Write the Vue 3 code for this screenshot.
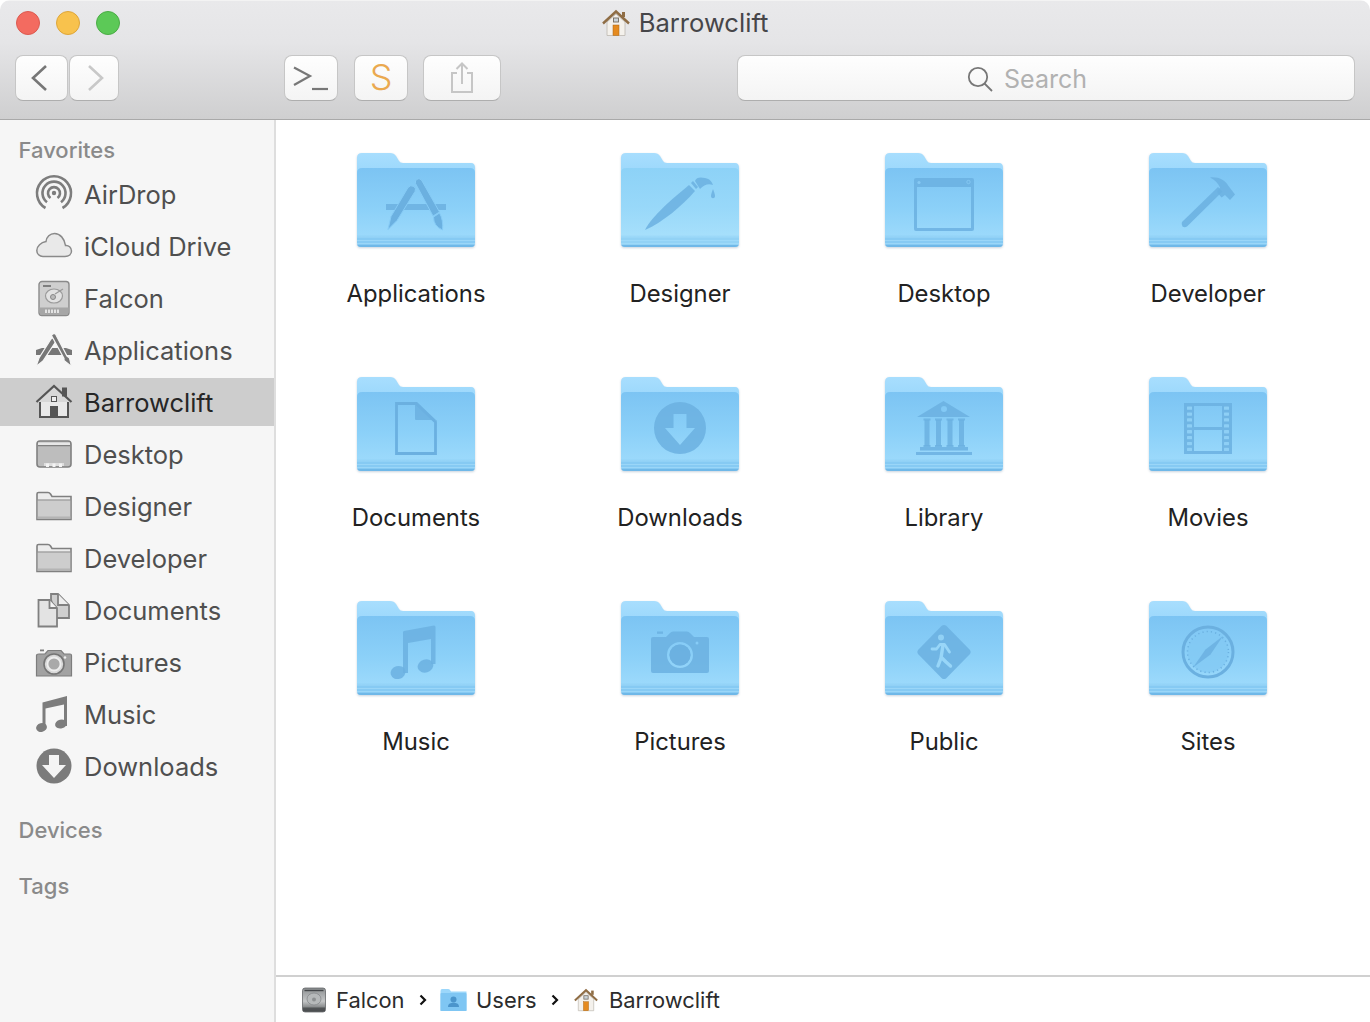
<script setup>
const favorites = [
  { name: 'AirDrop', icon: 'airdrop' },
  { name: 'iCloud Drive', icon: 'cloud' },
  { name: 'Falcon', icon: 'disk' },
  { name: 'Applications', icon: 'apps' },
  { name: 'Barrowclift', icon: 'home', selected: true },
  { name: 'Desktop', icon: 'desktop' },
  { name: 'Designer', icon: 'folder' },
  { name: 'Developer', icon: 'folder' },
  { name: 'Documents', icon: 'docs' },
  { name: 'Pictures', icon: 'camera' },
  { name: 'Music', icon: 'music' },
  { name: 'Downloads', icon: 'download' }
]
const folders = [
  { name: 'Applications', g: 'apps' },
  { name: 'Designer', g: 'brush', light: true },
  { name: 'Desktop', g: 'desktop' },
  { name: 'Developer', g: 'hammer' },
  { name: 'Documents', g: 'doc' },
  { name: 'Downloads', g: 'download' },
  { name: 'Library', g: 'library' },
  { name: 'Movies', g: 'movies' },
  { name: 'Music', g: 'music' },
  { name: 'Pictures', g: 'camera' },
  { name: 'Public', g: 'public' },
  { name: 'Sites', g: 'sites' }
]
const holes = [0, 1, 2, 3, 4, 5, 6, 7]
const columns = [43, 54.5, 66, 77.5]
</script>

<template>
  <div class="window">
    <svg class="defs" width="0" height="0" aria-hidden="true">
      <defs>
        <linearGradient id="front" x1="0" y1="0" x2="0" y2="1">
          <stop offset="0" stop-color="#7cc4f3" />
          <stop offset=".5" stop-color="#8bd0f8" />
          <stop offset=".85" stop-color="#9bd9fb" />
          <stop offset=".87" stop-color="#86caf3" />
          <stop offset="1" stop-color="#86caf3" />
        </linearGradient>
        <linearGradient id="frontLight" x1="0" y1="0" x2="0" y2="1">
          <stop offset="0" stop-color="#8dd2f7" />
          <stop offset=".5" stop-color="#98d8f9" />
          <stop offset=".85" stop-color="#a6dffb" />
          <stop offset=".87" stop-color="#92d2f5" />
          <stop offset="1" stop-color="#92d2f5" />
        </linearGradient>
        <linearGradient id="back" x1="0" y1="0" x2="0" y2="1">
          <stop offset="0" stop-color="#a8defe" />
          <stop offset=".25" stop-color="#9ad7fb" />
          <stop offset="1" stop-color="#8ccff8" />
        </linearGradient>
        <linearGradient id="diskGrad" x1="0" y1="0" x2="0" y2="1">
          <stop offset="0" stop-color="#8d9092" />
          <stop offset=".55" stop-color="#c4c6c7" />
          <stop offset="1" stop-color="#55585a" />
        </linearGradient>
        <symbol id="homeColor" viewBox="0 0 28 28">
          <path d="M5 13V26.5H23V13L14 5Z" fill="#f4f1ec" stroke="#bdb8b0" stroke-width=".8" />
          <path d="M1 14.5 14 2.5 27 14.5" fill="none" stroke="#8f6d45" stroke-width="2.4" />
          <rect x="20" y="3" width="3" height="5" fill="#8f6d45" />
          <rect x="11.5" y="9" width="5" height="4" fill="#c9d3da" stroke="#74695c" stroke-width=".9" />
          <rect x="11" y="16" width="6" height="10.5" fill="#e58a1f" stroke="#a96412" stroke-width=".5" />
        </symbol>
      </defs>
    </svg>

    <header class="toolbar">
      <div class="titlebar">
        <div class="lights">
          <span class="light red"></span>
          <span class="light yellow"></span>
          <span class="light green"></span>
        </div>
        <div class="title">
          <svg class="title-icon" width="28" height="28"><use href="#homeColor" /></svg>
          <span>Barrowclift</span>
        </div>
        <div></div>
      </div>
      <div class="tools">
        <div class="nav">
          <button class="btn back">
            <svg width="24" height="30" viewBox="0 0 24 30"><path d="M19 3 6 15 19 27" fill="none" stroke="#777" stroke-width="2.6" /></svg>
          </button>
          <button class="btn forward">
            <svg width="24" height="30" viewBox="0 0 24 30"><path d="M5 3 18 15 5 27" fill="none" stroke="#c8c8c8" stroke-width="2.6" /></svg>
          </button>
        </div>
        <button class="btn term">
          <svg width="36" height="30" viewBox="0 0 36 30"><path d="M1 4.500 17 13 1 22" fill="none" stroke="#777" stroke-width="2.2" /><path d="M19 26H35" stroke="#777" stroke-width="2.2" /></svg>
        </button>
        <button class="btn sublime">S</button>
        <button class="btn share">
          <svg width="24" height="32" viewBox="0 0 24 32"><path d="M7 11H2V30H22V11H17" fill="none" stroke="#c6c6c6" stroke-width="2" /><path d="M12 22V2M6.500 7 12 1.500 17.500 7" fill="none" stroke="#c6c6c6" stroke-width="2" /></svg>
        </button>
        <div class="search">
          <svg width="26" height="26" viewBox="0 0 26 26"><circle cx="11" cy="11" r="9.200" fill="none" stroke="#777" stroke-width="1.800" /><path d="M17.500 17.500 25 25" stroke="#777" stroke-width="1.800" /></svg>
          <span>Search</span>
        </div>
      </div>
    </header>

    <div class="body">
      <aside class="sidebar">
        <div class="heading first">Favorites</div>
        <div class="row" :class="{ selected: it.selected }" v-for="it in favorites" :key="it.name">
          <svg class="side-icon" width="36" height="36" viewBox="0 0 36 36">
            <g v-if="it.icon === 'airdrop'" fill="none" stroke="#7d7d7d" stroke-width="2.600">
              <path d="M9.500 31A17 17 0 1 1 26.500 31" />
              <path d="M11 25.200A11.500 11.500 0 1 1 25 25.200" />
              <path d="M14.500 21A6 6 0 1 1 21.500 21" />
              <circle cx="18" cy="16" r="2.200" fill="#7d7d7d" stroke="none" />
            </g>
            <path v-else-if="it.icon === 'cloud'" d="M7 27.500H29C33 27.500 35.500 25 35.500 22 35.500 18.500 32.500 16 29.500 16.500 28.500 9.500 24 4.500 18.500 4.500 14 4.500 10.500 8 10 12.500 5 13.500 .8 17 .8 21.500 .8 25 3.500 27.500 7 27.500Z" fill="#e9e9e9" stroke="#8a8a8a" stroke-width="1.500" />
            <g v-else-if="it.icon === 'disk'">
              <rect x="3" y=".5" width="30" height="34" rx="3" fill="#cfcfcf" stroke="#8a8a8a" stroke-width="1.400" />
              <path d="M7 5H15" stroke="#777" stroke-width="1.800" />
              <path d="M3.500 26.500H32.500V31Q32.500 34 30 34H6Q3.500 34 3.500 31Z" fill="#a6a6a6" />
              <path d="M10 28.500V32M13 28.500V32M16 28.500V32M19 28.500V32M22 28.500V32" stroke="#f2f2f2" stroke-width="1.600" />
              <ellipse cx="18" cy="15" rx="8.500" ry="7" fill="#e2e2e2" stroke="#9a9a9a" stroke-width="1.200" />
              <circle cx="17" cy="16" r="2.500" fill="#bbb" stroke="#888" />
              <path d="M19 13 27 8" stroke="#999" stroke-width="1.200" />
            </g>
            <g v-else-if="it.icon === 'apps'" fill="#777">
              <path d="M0 17 6 15H30L36 17V22H0Z" />
              <g stroke="#f6f6f6" stroke-width="1.200">
                <path d="M0 33.500 3 25 15 6Q17 4 19 5.500 20.500 7 19.500 9L7 28Z" />
                <path d="M15.500 2.500Q17 0 19.500 1L31 23 33.500 25 35.500 33.500 28 27.500 28 25.500Z" />
              </g>
            </g>
            <g v-else-if="it.icon === 'home'">
              <path d="M4 15.500V32H32V15.500" fill="#e9e9e9" stroke="#555" stroke-width="2" />
              <path d="M.5 17 18 1 35.500 17" fill="#d8d8d8" stroke="#555" stroke-width="2.200" />
              <rect x="26" y="2.500" width="5" height="9" fill="#555" />
              <rect x="15.500" y="11.500" width="5" height="5" fill="#eee" stroke="#555" stroke-width="1" />
              <rect x="14" y="21" width="8" height="11" fill="#555" />
            </g>
            <g v-else-if="it.icon === 'desktop'">
              <rect x="1" y="4" width="34" height="26" rx="3" fill="#bdbdbd" stroke="#808080" stroke-width="1.600" />
              <path d="M1.800 8.500H34.200" stroke="#808080" stroke-width="1.400" />
              <path d="M2 5.500H34V8H2Z" fill="#e7e7e7" />
              <path d="M8 29V26H28V29Z" fill="#dedede" />
              <path d="M10 26.500H13V30H10ZM16.500 26.500H19.500V30H16.500ZM23 26.500H26V30H23Z" fill="#f4f4f4" />
            </g>
            <g v-else-if="it.icon === 'folder'">
              <path d="M1 7V5Q1 3.500 2.500 3.500H12Q13.500 3.500 14.500 5L16 7.500H35V30.500H1Z" fill="#ececec" stroke="#808080" stroke-width="1.600" />
              <path d="M1.800 11.500H34.200V30H1.800Z" fill="#cdcdcd" />
              <path d="M1.800 11H34.200" stroke="#808080" stroke-width="1.200" />
              <path d="M1.800 27.500H34.200V30H1.800Z" fill="#b4b4b4" />
            </g>
            <g v-else-if="it.icon === 'docs'" stroke="#808080" stroke-width="1.800" stroke-linejoin="miter">
              <path d="M15 6.500V1H22L33 12V25H20Z" fill="#cfcfcf" />
              <path d="M22 1V12H33" fill="#eee" />
              <path d="M2.500 7H13.500L21 15V33.500H2.500Z" fill="#e3e3e3" />
              <path d="M13.500 7V15H21" fill="#f4f4f4" />
            </g>
            <g v-else-if="it.icon === 'camera'">
              <path d="M3 9H9L12 5.500H25L28 9H34Q35.500 9 35.500 10.500V31H.5V10.500Q.5 9 3 9Z" fill="#a2a2a2" stroke="#7d7d7d" stroke-width="1.200" />
              <rect x="4" y="4.500" width="4" height="1.800" fill="#7d7d7d" />
              <circle cx="18" cy="19" r="10" fill="#d8d8d8" stroke="#757575" stroke-width="1.600" />
              <circle cx="18" cy="19" r="6.500" fill="#a9a9a9" stroke="#eee" stroke-width="1.800" />
              <circle cx="29" cy="12.500" r="1.300" fill="#eee" />
            </g>
            <g v-else-if="it.icon === 'music'" fill="#7d7d7d">
              <path d="M6.500 5.500 31 -1V29H28V7.500L9.500 11.500V31H6.500Z" />
              <ellipse cx="5.500" cy="30.500" rx="5.500" ry="4.300" transform="rotate(-14 5.500 30.500)" />
              <ellipse cx="25" cy="27" rx="6" ry="4.300" transform="rotate(-14 25 27)" />
            </g>
            <g v-else-if="it.icon === 'download'">
              <circle cx="18" cy="17" r="17.500" fill="#7b7b7b" />
              <path d="M13 6H23V16H30L18 29 6 16H13Z" fill="#f4f4f4" />
            </g>
          </svg>
          <span class="row-text">{{ it.name }}</span>
        </div>
        <div class="heading devices">Devices</div>
        <div class="heading tags">Tags</div>
      </aside>

      <main class="main">
        <div class="grid">
          <div class="cell" v-for="f in folders" :key="f.name">
            <svg class="folder" width="120" height="100" viewBox="0 0 120 100">
              <path d="M1 8Q1 3 6 3H34Q38 3 40 6L43 11Q44 13 47 13H115Q119 13 119 18V90H1Z" fill="url(#back)" />
              <path d="M1 23Q1 18 6 18H114Q119 18 119 23V93Q119 97 115 97H5Q1 97 1 93Z" :fill="f.light ? 'url(#frontLight)' : 'url(#front)'" />
              <path d="M1 90.500H119M1 93.500H119" stroke="#a3dcfb" stroke-width="1" opacity=".7" />
              <path d="M1 87H119" stroke="#a8e0fc" stroke-width="1" opacity=".7" />
              <path d="M1.300 95Q2 97 5 97H115Q118 97 118.700 95Z" fill="#6fb8e8" />

              <g class="glyph">
                <g v-if="f.g === 'apps'">
                  <rect x="30" y="54" width="60" height="6" />
                  <g class="edge">
                    <path d="M32 79.500 35 66.500 52 37.500Q54.500 34.500 58 36.500 60.500 38.500 59 41.500L41 70.500Z" />
                    <path d="M59.500 31Q62 27 65.500 30L83.500 62 77 66 59.500 33.500Z" />
                    <path d="M77.500 67 83.500 63Q87.500 70 86.500 80 77.500 76 77.500 67Z" />
                  </g>
                </g>
                <g v-else-if="f.g === 'brush'">
                  <path d="M25 80C32 66 52 49 69 35L75 41C62 56 43 72 25 80Z" />
                  <path d="M71 33 76 39 78 37 73 31Z" />
                  <path d="M75 31C76 27 81 27 85 28 90 29 92 32 93 35 88 33 84 35 80 39Z" />
                  <path d="M93 39C94 42 95 44 95 46 95 49 91 49 91 46 91 44 92 42 93 39Z" />
                </g>
                <g v-else-if="f.g === 'desktop'">
                  <path fill-rule="evenodd" d="M32 28H88Q90 28 90 30V79Q90 81 88 81H32Q30 81 30 79V30Q30 28 32 28ZM33 37V78H87V37Z" />
                  <circle cx="35" cy="32.500" r="1.600" fill="#8bcdf6" />
                  <circle cx="84.500" cy="32" r="1.700" fill="none" stroke="#8bcdf6" stroke-width=".7" />
                </g>
                <g v-else-if="f.g === 'hammer'">
                  <path d="M34 72 70 37 74.500 41.500 39 76.500Q36.500 78 34.500 76.500 33 74.500 34 72Z" />
                  <path d="M62 27.500C70 26.500 77 30 80.500 36L87 44.500 82 50 77 45 73.500 47.500 69 42 72 37.500C70 33 67 30 62 27.500Z" />
                </g>
                <g v-else-if="f.g === 'doc'">
                  <path fill="none" stroke="#6bb0e0" stroke-width="2.800" d="M40.500 29.500H60L79.500 48V79.500H40.500Z" />
                  <path d="M59 28H61L81 47V46H60Q59 46 59 45Z" />
                </g>
                <g v-else-if="f.g === 'download'">
                  <path fill-rule="evenodd" d="M60 28A26 26 0 1 1 60 80 26 26 0 1 1 60 28ZM53.500 40V54H45L60 71 75 54H66.500V40Z" />
                </g>
                <g v-else-if="f.g === 'library'">
                  <path fill-rule="evenodd" d="M59.500 27 86 43H33ZM60 32A3 3 0 1 0 60 38 3 3 0 1 0 60 32Z" />
                  <g v-for="c in columns" :key="c">
                    <rect :x="c - 2.500" y="46" width="5" height="26" />
                    <rect :x="c - 3.500" y="44.500" width="7" height="2" />
                    <rect :x="c - 3.500" y="71" width="7" height="2" />
                  </g>
                  <rect x="36" y="73" width="48" height="3.500" />
                  <rect x="32" y="78" width="56" height="3" />
                </g>
                <g v-else-if="f.g === 'movies'">
                  <path fill-rule="evenodd" d="M36 29H84V80H36ZM46 32V53H74V32ZM46 56V77H74V56Z" />
                  <g fill="#93d3f8">
                    <rect v-for="h in holes" :key="'l' + h" x="39" :y="32.500 + h * 5.900" width="5" height="3.300" rx=".6" />
                    <rect v-for="h in holes" :key="'r' + h" x="76" :y="32.500 + h * 5.900" width="5" height="3.300" rx=".6" />
                  </g>
                </g>
                <g v-else-if="f.g === 'music'">
                  <path d="M48 33 78 27.500Q79.500 27.500 79.500 29V66H75V41L52 45V75H47V34Q47 33.500 48 33Z" />
                  <ellipse cx="42" cy="74.500" rx="7.500" ry="6.500" transform="rotate(-16 42 74.500)" />
                  <ellipse cx="69.500" cy="68" rx="8" ry="6.500" transform="rotate(-16 69.500 68)" />
                </g>
                <g v-else-if="f.g === 'camera'">
                  <path fill-rule="evenodd" d="M33 39H46L50 35Q51 33.500 53 33.500H67Q69 33.500 70 35L74 39H87Q89 39 89 41V73Q89 75 87 75H33Q31 75 31 73V41Q31 39 33 39ZM60 44A13 13 0 1 0 60 70 13 13 0 1 0 60 44ZM60 46.500A10.500 10.500 0 1 1 60 67.500 10.500 10.500 0 1 1 60 46.500ZM77 43.500A1.500 1.500 0 1 0 77 46.500 1.500 1.500 0 1 0 77 43.500Z" />
                  <circle cx="60" cy="57" r="10.500" />
                  <rect x="37" y="33.500" width="6" height="2.300" />
                </g>
                <g v-else-if="f.g === 'public'">
                  <path d="M58 27.500Q60 26.500 62 27.500L86 52Q87.500 54 86 56L62 80.500Q60 81.500 58 80.500L34 56Q32.500 54 34 52Z" />
                  <g fill="#98d6f8" stroke="#98d6f8">
                    <circle cx="57" cy="39.500" r="3" stroke="none" />
                    <path fill="none" stroke-width="2.800" stroke-linecap="round" stroke-linejoin="round" d="M48 51H52.500L56 46.500H60.500L65.500 54" />
                    <path fill="none" stroke-width="3.400" stroke-linecap="round" stroke-linejoin="round" d="M59 47 57 60 54 68M58 60 62 64 66.500 68" />
                  </g>
                </g>
                <g v-else-if="f.g === 'sites'">
                  <circle cx="60" cy="54" r="25" fill="none" stroke="#6bb0e0" stroke-width="3" />
                  <circle cx="60" cy="54" r="20.500" fill="#82c8f3" fill-opacity=".75" stroke="#6bb0e0" stroke-width="1.500" stroke-dasharray="1.200 3.100" />
                  <path d="M75 38 62.500 56.500 45 69.500 57.500 51.500Z" />
                </g>
              </g>
            </svg>
            <div class="label">{{ f.name }}</div>
          </div>
        </div>
        <footer class="pathbar">
          <svg class="crumb-disk" width="26" height="26" viewBox="0 0 26 26">
            <rect x="1.500" y="1" width="23" height="24" rx="2.500" fill="url(#diskGrad)" stroke="#55585a" stroke-width=".7" />
            <ellipse cx="13" cy="12" rx="7" ry="6" fill="#b6b9ba" stroke="#808385" stroke-width=".7" />
            <circle cx="13" cy="12.500" r="2" fill="#8d9092" />
            <path d="M3.500 3.500H22.500" stroke="#44474a" stroke-width="1.400" />
            <path d="M2 20.500H24V24H2Z" fill="#44474a" opacity=".75" />
          </svg>
          <span>Falcon</span>
          <svg class="sep" width="10" height="14" viewBox="0 0 10 14"><path d="M2.500 2.500 7 7 2.500 11.500" fill="none" stroke="#111" stroke-width="2.200" /></svg>
          <svg class="crumb-folder" width="27" height="24" viewBox="0 0 27 24">
            <path d="M.5 3Q.5 1 2 1H8Q9.500 1 10 2L11 3.500H26.500V23H.5Z" fill="#9bd7fb" />
            <path d="M.5 6Q.5 5 1.500 5H25.500Q26.500 5 26.500 6V22Q26.500 23 25.500 23H1.500Q.5 23 .5 22Z" fill="#7fc6f3" />
            <circle cx="13.500" cy="11.500" r="3" fill="#4b95cc" />
            <path d="M8 19C8 15.500 11 14.800 13.500 14.800 16 14.800 19 15.500 19 19Z" fill="#4b95cc" />
          </svg>
          <span>Users</span>
          <svg class="sep" width="10" height="14" viewBox="0 0 10 14"><path d="M2.500 2.500 7 7 2.500 11.500" fill="none" stroke="#111" stroke-width="2.200" /></svg>
          <svg class="crumb-home" width="24" height="24"><use href="#homeColor" /></svg>
          <span>Barrowclift</span>
        </footer>
      </main>
    </div>
  </div>
</template>

<style>
html, body { background: #fff; }
</style>

<style scoped>
.window {
  height: 1022px;
  width: 1370px;
  display: flex;
  flex-direction: column;
  overflow: hidden;
  border-radius: 10px 10px 0 0;
  font-family: Inter, "Liberation Sans", sans-serif;
  background: #fff;
}
.defs { display: block; width: 0; height: 0; }
.toolbar {
  height: 120px;
  box-sizing: border-box;
  flex: none;
  background: linear-gradient(#e9e9eb, #e5e5e7 35%, #cfcfd0);
  border-top: 1px solid #f3f3f3;
  border-bottom: 1px solid #a9a9a9;
}
.titlebar {
  height: 43px;
  display: grid;
  grid-template-columns: 1fr auto 1fr;
  align-items: center;
}
.lights { display: flex; gap: 16px; padding-left: 16px; }
.light { width: 24px; height: 24px; border-radius: 50%; box-sizing: border-box; }
.red { background: #f36b60; border: 1px solid #dc5a50; }
.yellow { background: #f8c24d; border: 1px solid #dea63a; }
.green { background: #5cc957; border: 1px solid #4bac46; }
.title {
  display: flex;
  align-items: center;
  gap: 9px;
  font-size: 25.6px;
  color: #464649;
}
.title-icon { display: block; }
.tools {
  display: flex;
  align-items: center;
  height: 46px;
  margin-top: 11px;
  padding: 0 15px;
}
.btn, .search {
  box-sizing: border-box;
  height: 46px;
  border: 1px solid #c6c6c6;
  border-bottom-color: #aeaeae;
  border-radius: 8px;
  background: linear-gradient(#fefefe, #f4f4f4);
  display: flex;
  align-items: center;
  justify-content: center;
  padding: 0;
  font-family: inherit;
}
.nav { display: flex; gap: 1px; }
.back { width: 53px; padding-right: 6px; }
.forward { width: 50px; padding-left: 3px; }
.term { width: 54px; margin-left: 165px; }
.sublime {
  width: 54px;
  margin-left: 16px;
  color: #eaa94f;
  font-size: 36px;
  font-weight: 300;
  padding-bottom: 3px;
}
.share { width: 78px; margin-left: 15px; }
.search {
  flex: 1;
  margin-left: 236px;
  gap: 11px;
  font-size: 25px;
  color: #b1b1b1;
  padding: 2px 38px 0 0;
}
.body { flex: 1; display: flex; min-height: 0; }
.sidebar {
  width: 276px;
  box-sizing: border-box;
  flex: none;
  background: #f6f6f6;
  border-right: 2px solid #dedede;
}
.heading {
  color: #8a8a8a;
  font-size: 22px;
  font-weight: 500;
  line-height: 26px;
  padding-left: 18.5px;
}
.first { padding-top: 17px; padding-bottom: 7px; }
.devices { margin-top: 27px; }
.tags { margin-top: 30px; }
.row {
  height: 48px;
  margin-bottom: 4px;
  padding: 2px 0 0 36px;
  box-sizing: border-box;
  display: flex;
  align-items: center;
  gap: 12px;
  font-size: 25.5px;
  color: #4f4f4f;
}
.row-text { margin-top: -2px; }
.row.selected { background: #cdcdcd; color: #262626; }
.side-icon { overflow: visible; display: block; flex: none; }
.main { flex: 1; display: flex; flex-direction: column; min-width: 0; }
.grid {
  flex: 1;
  display: grid;
  grid-template-columns: repeat(4, 264px);
  grid-auto-rows: 224px;
  padding: 30px 0 0 8px;
}
.cell { display: flex; flex-direction: column; align-items: center; }
.folder { display: block; filter: drop-shadow(0 1px 1px rgba(40, 80, 120, .25)); }
.glyph { fill: #6bb0e0; fill-opacity: .85; }
.edge { fill-opacity: 1; stroke: #86cbf6; stroke-width: 1; }
.label {
  margin-top: 29px;
  line-height: 30px;
  font-size: 23.85px;
  color: #222;
}
.pathbar {
  height: 47px;
  box-sizing: border-box;
  flex: none;
  border-top: 2px solid #d0d0d0;
  display: flex;
  align-items: center;
  padding-left: 25px;
  font-size: 21.9px;
  color: #2c2c2c;
}
.crumb-disk { margin-right: 9px; }
.sep { margin: 0 12px 0 13.5px; }
.crumb-folder { margin-right: 9px; }
.crumb-home { margin: 0 11px 0 2px; }
</style>
